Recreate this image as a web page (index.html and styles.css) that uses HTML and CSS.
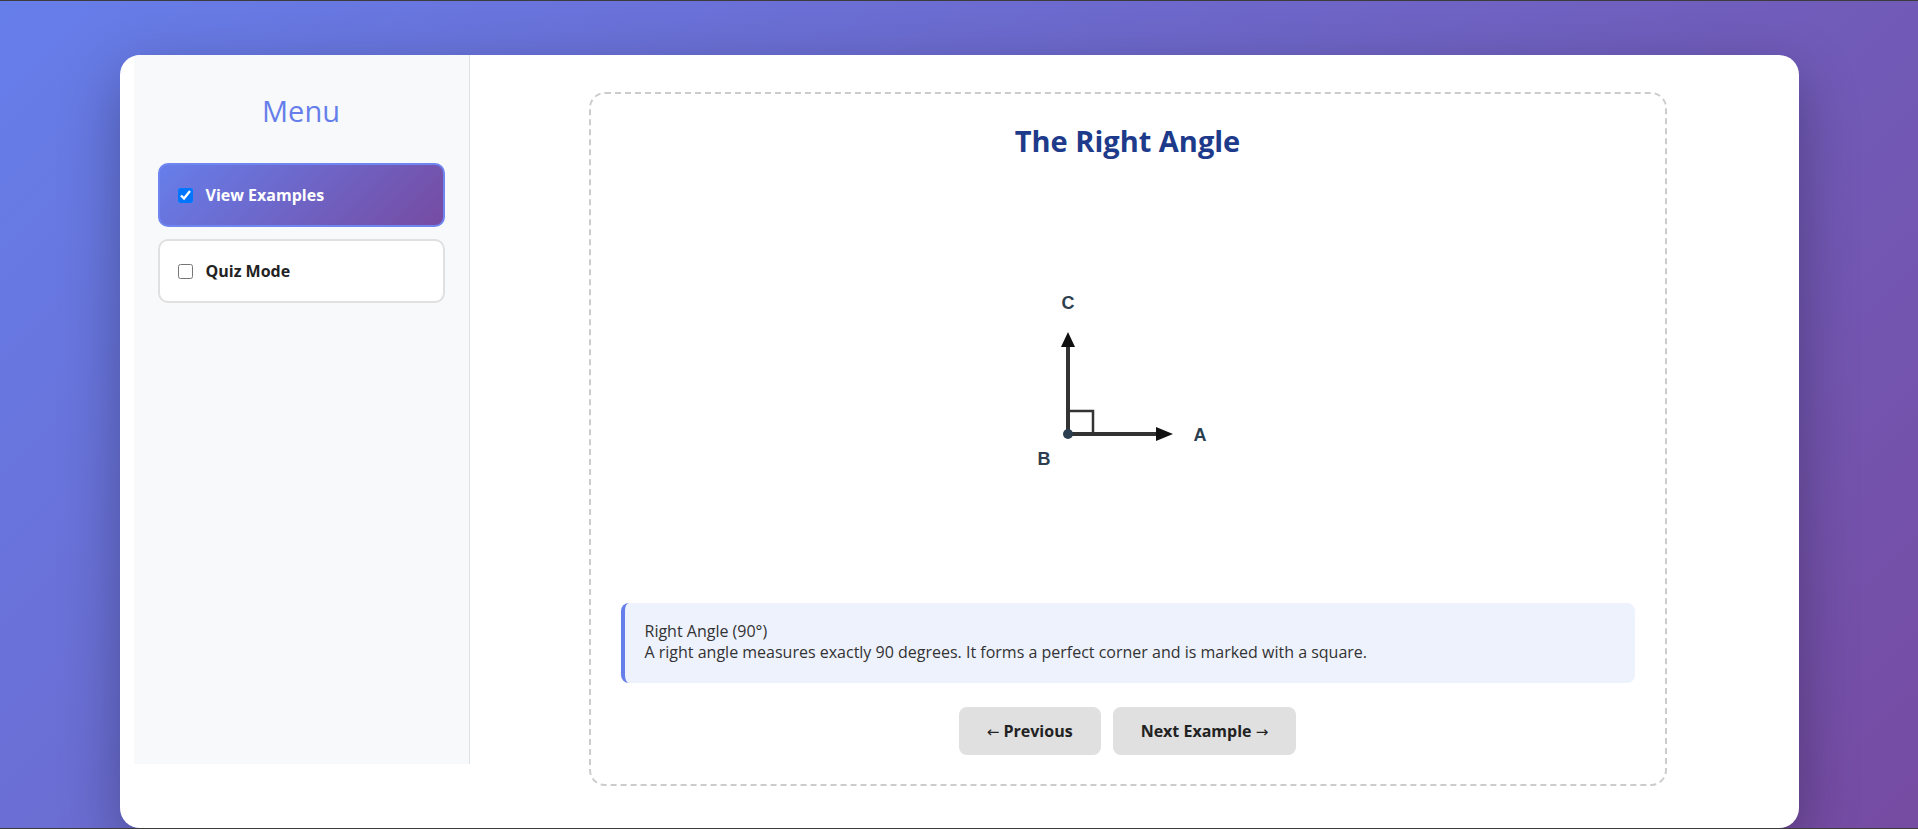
FILE: index.html
```html
<!DOCTYPE html>
<html lang="en">
<head>
<meta charset="utf-8">
<title>The Right Angle</title>
<link rel="stylesheet" href="styles.css">
</head>
<body>
<div class="page">
  <div class="card">
    <aside class="sidebar">
      <h2 class="menu-title">Menu</h2>
      <label class="menu-item active"><input type="checkbox" checked><span>View Examples</span></label>
      <label class="menu-item"><input type="checkbox"><span>Quiz Mode</span></label>
    </aside>
    <main class="main">
      <section class="example">
        <h1 class="example-title">The Right Angle</h1>
        <svg class="diagram" width="400" height="410" viewBox="0 0 400 410" xmlns="http://www.w3.org/2000/svg">
          <line x1="140" y1="259" x2="140" y2="170" stroke="#333" stroke-width="4"/>
          <polygon points="140,157 133,172 147,172" fill="#111"/>
          <line x1="140" y1="259" x2="230" y2="259" stroke="#333" stroke-width="4"/>
          <polygon points="245,259 228,252 228,266" fill="#111"/>
          <path d="M140 236 H165 V259" fill="none" stroke="#333" stroke-width="2.5"/>
          <circle cx="140" cy="259" r="5" fill="#2c3e50"/>
          <text class="lbl" x="140" y="134" text-anchor="middle">C</text>
          <text class="lbl" x="272" y="266" text-anchor="middle">A</text>
          <text class="lbl" x="116" y="290" text-anchor="middle">B</text>
        </svg>
        <div class="desc">Right Angle (90°)<br>A right angle measures exactly 90 degrees. It forms a perfect corner and is marked with a square.</div>
        <div class="nav">
          <button class="nav-btn"><span class="arrow">←</span> Previous</button>
          <button class="nav-btn">Next Example <span class="arrow">→</span></button>
        </div>
      </section>
    </main>
  </div>
</div>
</body>
</html>
```

FILE: styles.css
```css
* { box-sizing: border-box; }

html, body {
  margin: 0;
  padding: 0;
}

body {
  font-family: "Open Sans", "Noto Sans", sans-serif;
  overflow: hidden;
}

.page {
  height: 829px;
  border-top: 1px solid #3c3c3c;
  border-bottom: 1px solid #3c3c3c;
  padding-top: 54px;
  background: linear-gradient(135deg, #667eea 0%, #764ba2 100%);
  overflow: hidden;
}

.card {
  width: 1679px;
  height: 773px;
  margin: 0 auto;
  background: #fff;
  border-radius: 20px;
  display: flex;
  align-items: flex-start;
  padding-left: 14px;
  box-shadow: 0 20px 60px rgba(0, 0, 0, 0.3);
  overflow: hidden;
}

.sidebar {
  width: 336px;
  height: 709px;
  flex-shrink: 0;
  background: #f8f9fa;
  border-right: 1px solid #dee2e6;
  padding: 24px;
}

.menu-title {
  margin: 12px 0 32px;
  text-align: center;
  font-size: 29px;
  line-height: 40px;
  font-weight: 400;
  color: #667eea;
}

.menu-item {
  display: flex;
  align-items: center;
  gap: 13px;
  height: 64px;
  padding: 0 18px;
  margin-bottom: 12px;
  border: 2px solid #e0e0e0;
  border-radius: 10px;
  background: #fff;
  font-size: 16px;
  font-weight: 700;
  color: #222;
  cursor: pointer;
}

.menu-item input {
  width: 15px;
  height: 15px;
  margin: 0;
}

.menu-item.active {
  background: linear-gradient(135deg, #667eea 0%, #764ba2 100%);
  border-color: #6f86f0;
  color: #fff;
}

.main {
  flex: 1;
  padding: 37px 132px 0 119px;
}

.example {
  border: 2px dashed #ccc;
  border-radius: 16px;
  padding: 27px 30px 29px;
}

.example-title {
  margin: 0;
  text-align: center;
  font-size: 29px;
  line-height: 39px;
  font-weight: 700;
  color: #1e3a8a;
}

.diagram {
  display: block;
  margin: 15px auto 0;
}

.lbl {
  font-family: "Liberation Sans", Arial, sans-serif;
  font-weight: 700;
  font-size: 18px;
  fill: #2c3e50;
}

.desc {
  margin-top: 18px;
  padding: 18px 20px 20px;
  border-left: 4px solid #667eea;
  border-radius: 8px;
  background: #eef2fd;
  font-size: 16px;
  line-height: 21px;
  color: #333;
}

.nav {
  display: flex;
  justify-content: center;
  gap: 12px;
  margin-top: 24px;
}

.nav-btn {
  height: 48px;
  padding: 0 28px;
  border: none;
  border-radius: 8px;
  background: #e0e0e0;
  font-family: "Open Sans", "Noto Sans", sans-serif;
  font-size: 16px;
  font-weight: 700;
  color: #222;
  cursor: pointer;
}

.arrow {
  font-family: "DejaVu Sans", sans-serif;
  font-weight: 400;
  font-size: 15px;
}
```
